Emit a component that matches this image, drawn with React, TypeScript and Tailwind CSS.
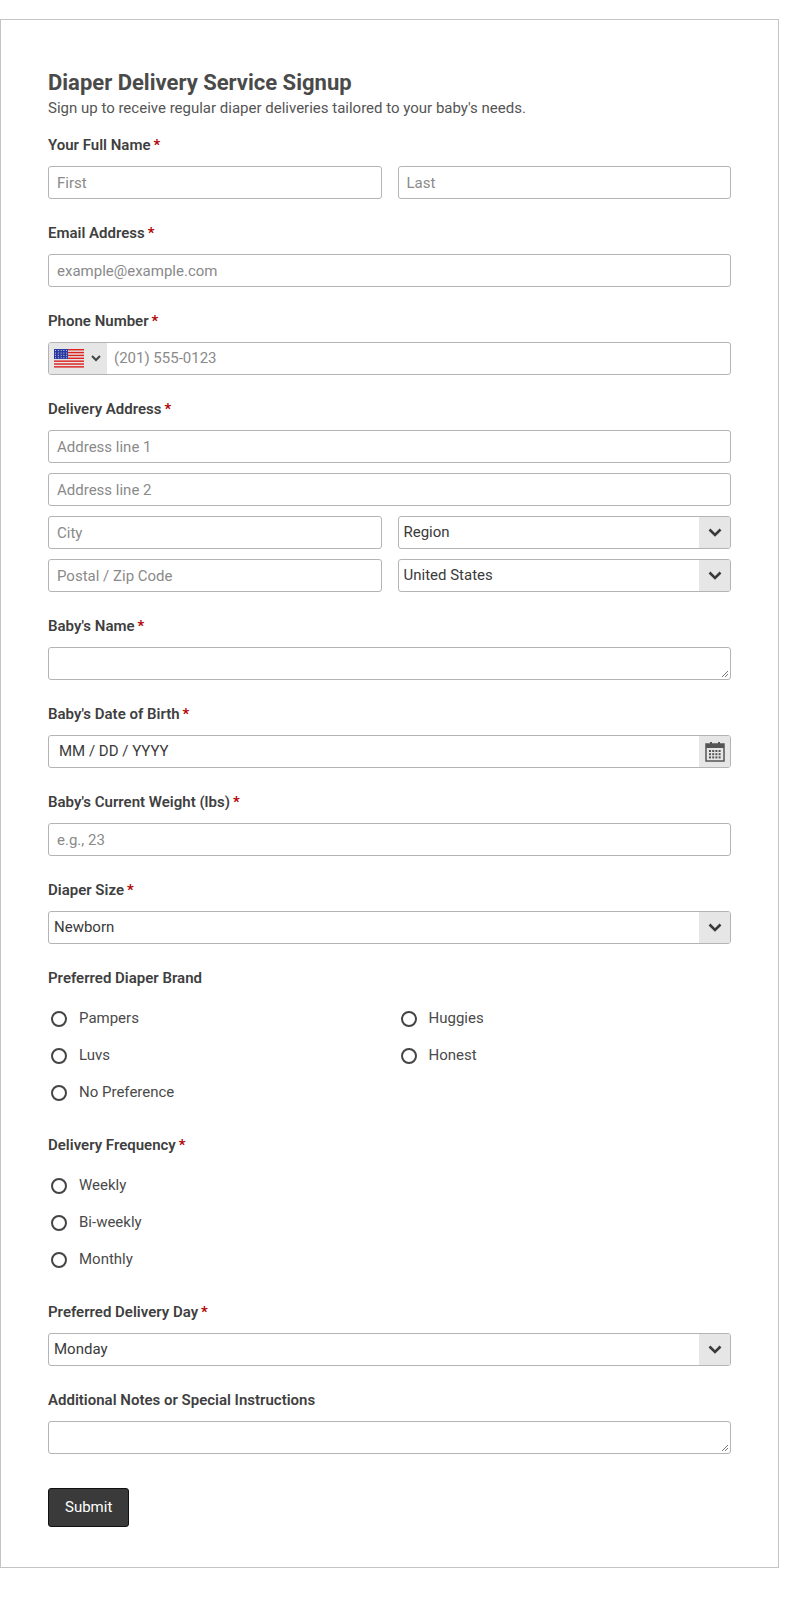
import React from "react";

const Req = () => <span className="text-[#b00000] ml-[3px]">*</span>;
const Label = ({ children, req }: { children: React.ReactNode; req?: boolean }) => (
  <div className="h-[20px] leading-[20px] text-[15px] font-semibold text-[#3f3f3f] mb-[11px]">
    {children}
    {req && <Req />}
  </div>
);
const inputCls =
  "h-[33px] w-full border border-[#b4b4b4] rounded-[3px] bg-white px-[8px] text-[15px] text-[#4a4a4a] placeholder:text-[#8a8a8a] outline-none [font-family:Roboto,sans-serif]";
const Input = ({ ph }: { ph: string }) => <input className={inputCls} placeholder={ph} />;

const Chevron = () => (
  <svg width="14" height="9" viewBox="0 0 14 9">
    <path d="M1.5 1.5 L7 7 L12.5 1.5" stroke="#3a3a3a" strokeWidth="2.6" fill="none" />
  </svg>
);
const Select = ({ value }: { value: string }) => (
  <div className="h-[33px] w-full border border-[#b4b4b4] rounded-[3px] bg-white flex overflow-hidden">
    <div className="flex-1 px-[5px] flex items-center text-[15px] text-[#3a3a3a]">{value}</div>
    <div className="w-[31px] bg-[#e6e6e6] flex items-center justify-center">
      <Chevron />
    </div>
  </div>
);
const TextArea = () => (
  <div className="h-[33px] w-full border border-[#b4b4b4] rounded-[3px] bg-white relative">
    <svg className="absolute right-[1px] bottom-[1px]" width="8" height="8" viewBox="0 0 8 8">
      <path d="M7 1 L1 7 M7 4 L4 7" stroke="#777" strokeWidth="1" />
    </svg>
  </div>
);
const Radio = ({ label }: { label: string }) => (
  <div className="h-[37px] flex items-center">
    <span className="w-[16px] h-[16px] rounded-full border-2 border-[#444] ml-[3px] mr-[12px]" />
    <span className="text-[15px] text-[#4a4a4a]">{label}</span>
  </div>
);
const Field = ({ children }: { children: React.ReactNode }) => <div className="mb-[24px]">{children}</div>;

const Flag = () => (
  <svg width="30" height="20" viewBox="0 0 30 20">
    {Array.from({ length: 7 }).map((_, i) => (
      <rect key={i} x="0" y={i * 2.86} width="30" height="1.43" fill="#d22" />
    ))}
    <rect x="0" y="0" width="14" height="10" fill="#2a3aa0" />
    {Array.from({ length: 20 }).map((_, i) => (
      <circle key={i} cx={1.5 + (i % 5) * 2.8} cy={1.5 + Math.floor(i / 5) * 2.4} r="0.5" fill="#fff" />
    ))}
  </svg>
);

export default function App() {
  return (
    <div className="bg-white min-h-[1612px] pt-[19px] [font-family:Roboto,sans-serif]">
      <div className="w-[779px] h-[1549px] border border-[#c4c4c4] px-[47px] pt-[50px]">
        <h1 className="text-[22px] font-bold text-[#4a4a4a] leading-[26px]">Diaper Delivery Service Signup</h1>
        <p className="text-[15px] text-[#555] leading-[20px] mt-[2px] mb-[17px]">
          Sign up to receive regular diaper deliveries tailored to your baby's needs.
        </p>
        <Field>
          <Label req>Your Full Name</Label>
          <div className="grid grid-cols-2 gap-[16px]">
            <Input ph="First" />
            <Input ph="Last" />
          </div>
        </Field>
        <Field>
          <Label req>Email Address</Label>
          <Input ph="example@example.com" />
        </Field>
        <Field>
          <Label req>Phone Number</Label>
          <div className="h-[33px] w-full border border-[#b4b4b4] rounded-[3px] bg-white flex overflow-hidden">
            <div className="w-[58px] bg-[#e6e6e6] flex items-center pl-[5px] gap-[7px]">
              <Flag />
              <svg width="10" height="7" viewBox="0 0 10 7">
                <path d="M1 1 L5 5 L9 1" stroke="#444" strokeWidth="2" fill="none" />
              </svg>
            </div>
            <div className="flex-1 px-[7px] flex items-center text-[15px] text-[#8a8a8a]">(201) 555-0123</div>
          </div>
        </Field>
        <Field>
          <Label req>Delivery Address</Label>
          <div className="flex flex-col gap-[10px]">
            <Input ph="Address line 1" />
            <Input ph="Address line 2" />
            <div className="grid grid-cols-2 gap-[16px]">
              <Input ph="City" />
              <Select value="Region" />
            </div>
            <div className="grid grid-cols-2 gap-[16px]">
              <Input ph="Postal / Zip Code" />
              <Select value="United States" />
            </div>
          </div>
        </Field>
        <Field>
          <Label req>Baby's Name</Label>
          <TextArea />
        </Field>
        <Field>
          <Label req>Baby's Date of Birth</Label>
          <div className="h-[33px] w-full border border-[#b4b4b4] rounded-[3px] bg-white flex overflow-hidden">
            <div className="flex-1 px-[10px] flex items-center text-[15px] text-[#3a3a3a]">MM / DD / YYYY</div>
            <div className="w-[31px] bg-[#e6e6e6] flex items-center justify-center">
              <svg width="20" height="20" viewBox="0 0 20 20">
                <rect x="1" y="2" width="18" height="17" fill="none" stroke="#555" strokeWidth="1.5" />
                <rect x="1" y="2" width="18" height="4" fill="#555" />
                <rect x="5" y="0" width="2" height="4" fill="#555" />
                <rect x="13" y="0" width="2" height="4" fill="#555" />
                {[0, 1, 2].map((r) =>
                  [0, 1, 2, 3].map((c) => (
                    <rect key={`${r}-${c}`} x={4 + c * 3.2} y={8 + r * 3.2} width="2" height="2" fill="#555" />
                  ))
                )}
              </svg>
            </div>
          </div>
        </Field>
        <Field>
          <Label req>Baby's Current Weight (lbs)</Label>
          <Input ph="e.g., 23" />
        </Field>
        <Field>
          <Label req>Diaper Size</Label>
          <Select value="Newborn" />
        </Field>
        <div className="mb-[24px]">
          <div className="h-[20px] leading-[20px] text-[15px] font-semibold text-[#3f3f3f] mb-[12px]">Preferred Diaper Brand</div>
          <div className="grid grid-cols-2 gap-x-[16px]">
            <Radio label="Pampers" />
            <Radio label="Huggies" />
            <Radio label="Luvs" />
            <Radio label="Honest" />
            <Radio label="No Preference" />
          </div>
        </div>
        <div className="mb-[24px]">
          <div className="h-[20px] leading-[20px] text-[15px] font-semibold text-[#3f3f3f] mb-[12px]">
            Delivery Frequency<Req />
          </div>
          <Radio label="Weekly" />
          <Radio label="Bi-weekly" />
          <Radio label="Monthly" />
        </div>
        <Field>
          <Label req>Preferred Delivery Day</Label>
          <Select value="Monday" />
        </Field>
        <Field>
          <Label>Additional Notes or Special Instructions</Label>
          <TextArea />
        </Field>
        <button className="mt-[10px] h-[39px] px-[16px] bg-[#3a3a3a] border border-[#111] rounded-[3px] text-white text-[15px] [font-family:Roboto,sans-serif]">
          Submit
        </button>
      </div>
    </div>
  );
}
